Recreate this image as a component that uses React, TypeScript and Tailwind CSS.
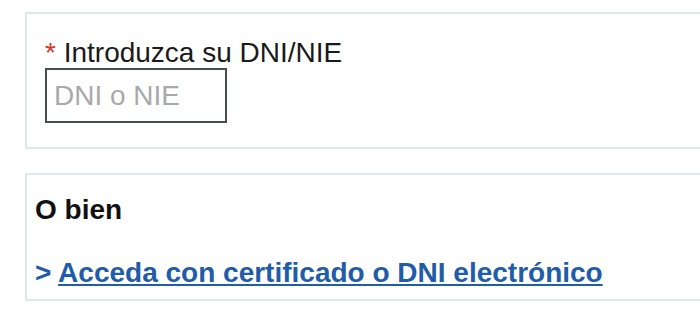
import React from "react";

export default function App() {
  return (
    <div
      className="w-[700px] h-[316px] overflow-hidden bg-white pl-[25px] pt-[12px]"
      style={{ fontFamily: '"Liberation Sans", Arial, Helvetica, sans-serif' }}
    >
      <div className="w-[720px] border-y-2 border-l-2 border-[#dfe6ee] pl-[18px] pt-[23px] pb-[24px]">
        <label className="block text-[28px] leading-[31px] text-[#1a1a1a]">
          <span className="text-[#d2352b]">*</span> Introduzca su DNI/NIE
        </label>
        <input
          type="text"
          placeholder="DNI o NIE"
          className="block w-[182px] h-[55px] border-2 border-[#474b52] px-[7px] text-[28px] leading-[32px] text-[#1a1a1a] placeholder:text-[#a9a9a9] outline-none"
          style={{ fontFamily: '"Liberation Sans", Arial, Helvetica, sans-serif' }}
        />
      </div>
      <div className="mt-[24px] w-[720px] border-y-2 border-l-2 border-[#dfe6ee] pl-[8px] pt-[19px] pb-[10px]">
        <h3 className="text-[28px] leading-[32px] font-bold text-[#111111]">O bien</h3>
        <p className="mt-[31px] text-[28px] leading-[32px] font-bold text-[#1f5ca9]">
          &gt;{" "}
          <a href="#" className="underline text-[#1f5ca9]">
            Acceda con certificado o DNI electrónico
          </a>
        </p>
      </div>
    </div>
  );
}
